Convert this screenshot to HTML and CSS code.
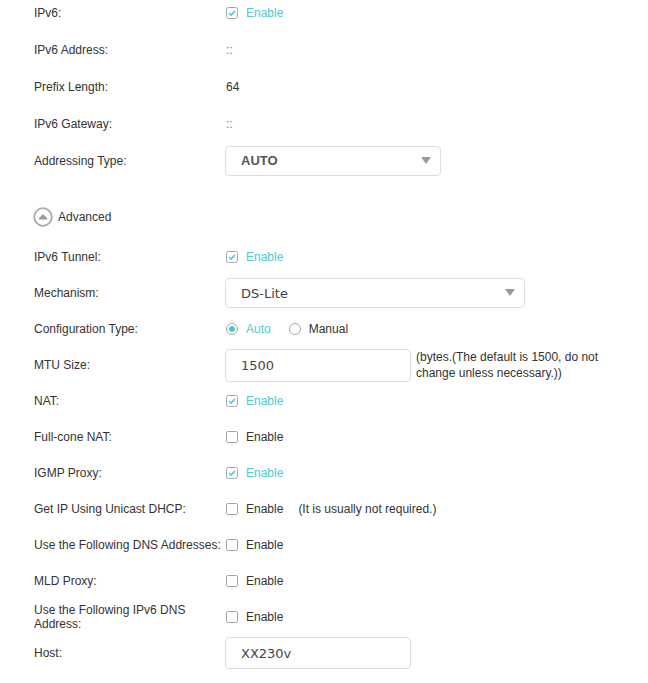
FILE: index.html
```html
<!DOCTYPE html>
<html>
<head>
<meta charset="utf-8">
<link rel="stylesheet" href="styles.css">
</head>
<body>
<div class="page">
  <section class="group top">
    <div class="row">
      <div class="label">IPv6:</div>
      <div class="ctrl">
        <span class="cb checked"><svg viewBox="0 0 12 12" width="12" height="12"><rect x="0.5" y="0.5" width="11" height="11" rx="2" fill="#fff" stroke="#a6a6a6"/><path d="M3 6.2 L5.1 8.2 L9 3.9" fill="none" stroke="#4acbd6" stroke-width="1.6"/></svg></span>
        <span class="opt on">Enable</span>
      </div>
    </div>
    <div class="row">
      <div class="label">IPv6 Address:</div>
      <div class="ctrl"><span class="val dim">::</span></div>
    </div>
    <div class="row">
      <div class="label">Prefix Length:</div>
      <div class="ctrl"><span class="val">64</span></div>
    </div>
    <div class="row">
      <div class="label">IPv6 Gateway:</div>
      <div class="ctrl"><span class="val dim">::</span></div>
    </div>
    <div class="row">
      <div class="label">Addressing Type:</div>
      <div class="ctrl">
        <div class="select w216"><span class="sel-text bold">AUTO</span><span class="arrow"></span></div>
      </div>
    </div>
  </section>

  <div class="advanced">
    <svg class="adv-icon" viewBox="0 0 20 20" width="20" height="20"><circle cx="10" cy="10" r="8.8" fill="#fff" stroke="#a9a9a9" stroke-width="1.8"/><path d="M6.6 11.6 L10 8.2 L13.4 11.6 Z" fill="#9a9a9a" stroke="#9a9a9a" stroke-width="1.6" stroke-linejoin="round"/></svg>
    <span>Advanced</span>
  </div>

  <section class="group bottom">
    <div class="row">
      <div class="label">IPv6 Tunnel:</div>
      <div class="ctrl">
        <span class="cb checked"><svg viewBox="0 0 12 12" width="12" height="12"><rect x="0.5" y="0.5" width="11" height="11" rx="2" fill="#fff" stroke="#a6a6a6"/><path d="M3 6.2 L5.1 8.2 L9 3.9" fill="none" stroke="#4acbd6" stroke-width="1.6"/></svg></span>
        <span class="opt on">Enable</span>
      </div>
    </div>
    <div class="row">
      <div class="label">Mechanism:</div>
      <div class="ctrl">
        <div class="select w300"><span class="sel-text">DS-Lite</span><span class="arrow"></span></div>
      </div>
    </div>
    <div class="row">
      <div class="label">Configuration Type:</div>
      <div class="ctrl">
        <span class="radio checked"></span><span class="opt on">Auto</span>
        <span class="radio gap-left"></span><span class="opt">Manual</span>
      </div>
    </div>
    <div class="row">
      <div class="label">MTU Size:</div>
      <div class="ctrl">
        <div class="input w186 tall"><span class="sel-text">1500</span></div>
        <span class="hint">(bytes.(The default is 1500, do not change unless necessary.))</span>
      </div>
    </div>
    <div class="row">
      <div class="label">NAT:</div>
      <div class="ctrl">
        <span class="cb checked"><svg viewBox="0 0 12 12" width="12" height="12"><rect x="0.5" y="0.5" width="11" height="11" rx="2" fill="#fff" stroke="#a6a6a6"/><path d="M3 6.2 L5.1 8.2 L9 3.9" fill="none" stroke="#4acbd6" stroke-width="1.6"/></svg></span>
        <span class="opt on">Enable</span>
      </div>
    </div>
    <div class="row">
      <div class="label">Full-cone NAT:</div>
      <div class="ctrl">
        <span class="cb"></span>
        <span class="opt">Enable</span>
      </div>
    </div>
    <div class="row">
      <div class="label">IGMP Proxy:</div>
      <div class="ctrl">
        <span class="cb checked"><svg viewBox="0 0 12 12" width="12" height="12"><rect x="0.5" y="0.5" width="11" height="11" rx="2" fill="#fff" stroke="#a6a6a6"/><path d="M3 6.2 L5.1 8.2 L9 3.9" fill="none" stroke="#4acbd6" stroke-width="1.6"/></svg></span>
        <span class="opt on">Enable</span>
      </div>
    </div>
    <div class="row">
      <div class="label">Get IP Using Unicast DHCP:</div>
      <div class="ctrl">
        <span class="cb"></span>
        <span class="opt">Enable</span>
        <span class="note">(It is usually not required.)</span>
      </div>
    </div>
    <div class="row">
      <div class="label">Use the Following DNS Addresses:</div>
      <div class="ctrl">
        <span class="cb"></span>
        <span class="opt">Enable</span>
      </div>
    </div>
    <div class="row">
      <div class="label">MLD Proxy:</div>
      <div class="ctrl">
        <span class="cb"></span>
        <span class="opt">Enable</span>
      </div>
    </div>
    <div class="row">
      <div class="label two">Use the Following IPv6 DNS Address:</div>
      <div class="ctrl">
        <span class="cb"></span>
        <span class="opt">Enable</span>
      </div>
    </div>
    <div class="row">
      <div class="label">Host:</div>
      <div class="ctrl">
        <div class="input w186"><span class="sel-text">XX230v</span></div>
      </div>
    </div>
  </section>
</div>
</body>
</html>
```

FILE: styles.css
```css
html, body {
  margin: 0;
  padding: 0;
  background: #fff;
}

body {
  font-family: "Liberation Sans", Arial, sans-serif;
  font-size: 12px;
  color: #333;
}

.page {
  padding-left: 34px;
  margin-top: -6px;
}

.row {
  display: grid;
  grid-template-columns: 191px 1fr;
  align-items: center;
}

.top .row {
  height: 37px;
}

.bottom .row {
  height: 36px;
}

.label {
  line-height: 14px;
  color: #333;
}

.ctrl {
  display: flex;
  align-items: center;
}

.cb {
  display: inline-block;
  width: 12px;
  height: 12px;
  margin-left: 1px;
  box-sizing: border-box;
  border: 1px solid #a6a6a6;
  border-radius: 2px;
  background: #fff;
}

.cb.checked {
  border: none;
}

.cb svg {
  display: block;
}

.opt {
  margin-left: 8px;
  color: #333;
}

.opt.on {
  color: #4acbd6;
}

.note {
  margin-left: 15px;
  color: #333;
}

.val {
  margin-left: 1px;
  color: #333;
}

.val.dim {
  color: #777;
}

.radio {
  display: inline-block;
  box-sizing: border-box;
  width: 12px;
  height: 12px;
  margin-left: 1px;
  border: 1px solid #a6a6a6;
  border-radius: 50%;
  background: #fff;
  position: relative;
}

.radio.checked::after {
  content: "";
  position: absolute;
  left: 2px;
  top: 2px;
  width: 6px;
  height: 6px;
  border-radius: 50%;
  background: #4acbd6;
}

.radio.gap-left {
  margin-left: 18px;
}

.select,
.input {
  box-sizing: border-box;
  display: flex;
  align-items: center;
  justify-content: space-between;
  height: 30px;
  border: 1px solid #dedede;
  border-radius: 4px;
  background: #fff;
  padding-left: 15px;
  padding-right: 9px;
}

.input {
  height: 32px;
}

.input.tall {
  height: 33px;
}

.w216 { width: 216px; }
.w300 { width: 300px; }
.w186 { width: 186px; }

.sel-text {
  font-family: "DejaVu Sans", Verdana, sans-serif;
  font-size: 13px;
  color: #444;
}

.sel-text.bold {
  font-family: "Liberation Sans", Arial, sans-serif;
  font-weight: bold;
  font-size: 13px;
  color: #555;
}

.arrow {
  width: 0;
  height: 0;
  border-left: 5px solid transparent;
  border-right: 5px solid transparent;
  border-top: 7px solid #9a9a9a;
  margin-top: -1px;
}

.hint {
  width: 200px;
  margin-left: 5px;
  line-height: 16px;
  color: #333;
}

.advanced {
  display: flex;
  align-items: center;
  height: 37px;
  margin-top: 19px;
  margin-bottom: 4px;
}

.adv-icon {
  display: block;
  margin-left: -1px;
}

.advanced span {
  margin-left: 5px;
  color: #333;
}
```
